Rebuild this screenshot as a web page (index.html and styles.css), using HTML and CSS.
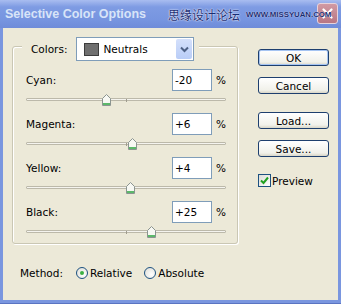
FILE: index.html
```html
<!DOCTYPE html>
<html lang="en">
<head>
  <meta charset="UTF-8">
  <title>Selective Color Options</title>
  <link rel="stylesheet" href="styles.css">
</head>
<body>
  <div class="window">
    <div class="titlebar">
      <span class="close">
        <svg width="11" height="11" viewBox="0 0 11 11"><path d="M1.5 1.5 L9.5 9.5 M9.5 1.5 L1.5 9.5" stroke="#fff" stroke-width="2.2" stroke-linecap="round"/></svg>
      </span>
      <span class="title">Selective Color Options</span>
      <span class="mark-cn">思缘设计论坛</span>
      <span class="mark-url">WWW.MISSYUAN.COM</span>
    </div>
    <div class="content">
      <div class="top">
        <div class="group">
          <div class="legend">
            <span class="lbl">Colors:</span>
            <div class="select">
              <span class="swatch"></span>
              <span class="val">Neutrals</span>
              <span class="drop">
                <svg width="9" height="7" viewBox="0 0 9 7"><path d="M1 1.5 L4.5 5 L8 1.5" fill="none" stroke="#4d6185" stroke-width="2"/></svg>
              </span>
            </div>
          </div>

          <div class="row"><span class="name">Cyan:</span><span class="input">-20</span><span class="pct">%</span></div>
          <div class="slider" style="--v:-20">
            <div class="track"><span class="tick"></span></div>
            <svg class="thumb" width="9" height="12" viewBox="0 0 9 12"><path d="M0.5 4.5 L4.5 0.5 L8.5 4.5 V11.5 H0.5 Z" fill="#f7f8f3" stroke="#8b9490"/><rect x="1" y="9" width="7" height="2" fill="#5cb86a"/></svg>
          </div>

          <div class="row"><span class="name">Magenta:</span><span class="input">+6</span><span class="pct">%</span></div>
          <div class="slider" style="--v:6">
            <div class="track"><span class="tick"></span></div>
            <svg class="thumb" width="9" height="12" viewBox="0 0 9 12"><path d="M0.5 4.5 L4.5 0.5 L8.5 4.5 V11.5 H0.5 Z" fill="#f7f8f3" stroke="#8b9490"/><rect x="1" y="9" width="7" height="2" fill="#5cb86a"/></svg>
          </div>

          <div class="row"><span class="name">Yellow:</span><span class="input">+4</span><span class="pct">%</span></div>
          <div class="slider" style="--v:4">
            <div class="track"><span class="tick"></span></div>
            <svg class="thumb" width="9" height="12" viewBox="0 0 9 12"><path d="M0.5 4.5 L4.5 0.5 L8.5 4.5 V11.5 H0.5 Z" fill="#f7f8f3" stroke="#8b9490"/><rect x="1" y="9" width="7" height="2" fill="#5cb86a"/></svg>
          </div>

          <div class="row"><span class="name">Black:</span><span class="input">+25</span><span class="pct">%</span></div>
          <div class="slider" style="--v:25">
            <div class="track"><span class="tick"></span></div>
            <svg class="thumb" width="9" height="12" viewBox="0 0 9 12"><path d="M0.5 4.5 L4.5 0.5 L8.5 4.5 V11.5 H0.5 Z" fill="#f7f8f3" stroke="#8b9490"/><rect x="1" y="9" width="7" height="2" fill="#5cb86a"/></svg>
          </div>
        </div>

        <div class="buttons">
          <span class="btn default">OK</span>
          <span class="btn">Cancel</span>
          <span class="btn gap">Load...</span>
          <span class="btn">Save...</span>
          <div class="check">
            <span class="box">
              <svg width="9" height="9" viewBox="0 0 9 9"><path d="M1 4.5 L3.5 7 L8 1.5" fill="none" stroke="#21a121" stroke-width="2"/></svg>
            </span>
            <span>Preview</span>
          </div>
        </div>
      </div>

      <div class="method">
        <span class="mlabel">Method:</span>
        <span class="radio on"><span class="dot"></span></span>
        <span class="rlabel">Relative</span>
        <span class="radio"></span>
        <span class="rlabel">Absolute</span>
      </div>
    </div>
  </div>
</body>
</html>
```

FILE: styles.css
```css
body { margin: 0; font-family: "DejaVu Sans", sans-serif; font-size: 10.5px; color: #000; }
.window { width: 341px; height: 304px; display: flex; flex-direction: column; background: #7a96df; box-sizing: border-box; border-bottom: 1px solid #5a74c2; }

.titlebar { height: 28px; flex-shrink: 0; display: flex; align-items: center; position: relative; overflow: hidden; white-space: nowrap; background: linear-gradient(#a9bdf0, #7e9be3 25%, #7795e0 70%, #6f8cd9); }
.titlebar > span { flex-shrink: 0; }
.title { margin-left: 5px; font-family: "Liberation Sans", sans-serif; font-weight: bold; font-size: 12.5px; color: #d8e4f8; }
.mark-cn { margin-left: 22px; font-family: "Noto Sans CJK SC", sans-serif; font-size: 12px; color: #1a2c72; text-shadow: 0 0 1px #fff, 0 0 2px #fff; }
.mark-url { position: relative; z-index: 2; margin-left: 6px; font-family: "Liberation Sans", sans-serif; font-weight: bold; font-size: 7.8px; color: #1a2c72; text-shadow: 0 0 1px #fff; }
.close { position: absolute; z-index: 0; left: 317px; top: 3px; width: 19px; height: 19px; border: 1px solid #e6d3dc; border-radius: 3px; background: linear-gradient(#d19aa4, #b87683); display: flex; align-items: center; justify-content: center; }

.content { flex: 1; margin: 0 3px 3px; background: #ece9d8; padding: 18px 9px 0; }
.top { display: flex; }

.group { width: 226px; height: 198px; box-sizing: border-box; border: 1px solid #cac7b4; border-radius: 3px; box-shadow: inset 1px 1px 0 #fff, 1px 1px 0 #fff; padding: 0 11px 0 13px; }
.legend { display: flex; align-items: center; width: fit-content; margin: -10px 0 0 -4px; padding: 0 5px 0 9px; background: #ece9d8; }
.lbl { margin-right: 9px; }
.select { width: 118px; height: 24px; box-sizing: border-box; border: 1px solid #7f9db9; background: #fff; display: flex; align-items: center; padding: 1px; }
.swatch { width: 13px; height: 11px; margin-left: 6px; background: #6f6f6f; border: 1px solid #3c3c3c; }
.val { margin-left: 4px; flex: 1; }
.drop { width: 16px; height: 20px; background: linear-gradient(#d4e0fb, #b9cdf7); border-radius: 2px; display: flex; align-items: center; justify-content: center; }

.row { display: flex; align-items: center; height: 22px; margin-top: 0; }
.legend + .row { margin-top: 8px; }
.name { flex: 1; }
.input { width: 40px; height: 22px; box-sizing: border-box; border: 1px solid #7f9db9; background: #fff; padding-left: 2px; line-height: 20px; }
.pct { width: 14px; text-align: right; }

.slider { height: 22px; position: relative; }
.slider:last-child { height: 20px; }
.track { position: relative; top: 7px; height: 1px; border: 1px solid #bcb9aa; border-radius: 1px; background: #f5f4ef; }
.tick { position: absolute; left: 99px; top: 0; width: 1px; height: 3px; background: #9f9c8e; }
.thumb { position: absolute; top: 3px; left: calc(100px + var(--v) * 1px - 4.5px); }

.buttons { margin: 3px 0 0 20px; display: flex; flex-direction: column; }
.btn { width: 71px; height: 17px; box-sizing: border-box; border: 1px solid #1e3f6e; border-radius: 3px; background: linear-gradient(#ffffff, #f1f1ea 80%, #d8d5c6); display: flex; align-items: center; justify-content: center; margin-bottom: 11px; }
.btn.default { box-shadow: inset 0 0 0 1px #a5c4f2; }
.btn.gap { margin-top: 7px; }
.check { display: flex; align-items: center; margin-top: 6px; }
.box { width: 13px; height: 13px; box-sizing: border-box; border: 1px solid #1c5180; background: linear-gradient(135deg, #dcdcd6, #fff); display: flex; align-items: center; justify-content: center; margin-right: 1px; }

.method { display: flex; align-items: center; margin: 21px 0 0 8px; height: 16px; }
.mlabel { margin-right: 13px; }
.radio { width: 12px; height: 12px; box-sizing: border-box; border: 1px solid #1c5180; border-radius: 50%; background: radial-gradient(circle at 65% 65%, #fff, #dcdcd4); display: flex; align-items: center; justify-content: center; margin-right: 2px; }
.dot { width: 4px; height: 4px; border-radius: 50%; background: #3cb043; }
.rlabel { margin-right: 12px; }
```
